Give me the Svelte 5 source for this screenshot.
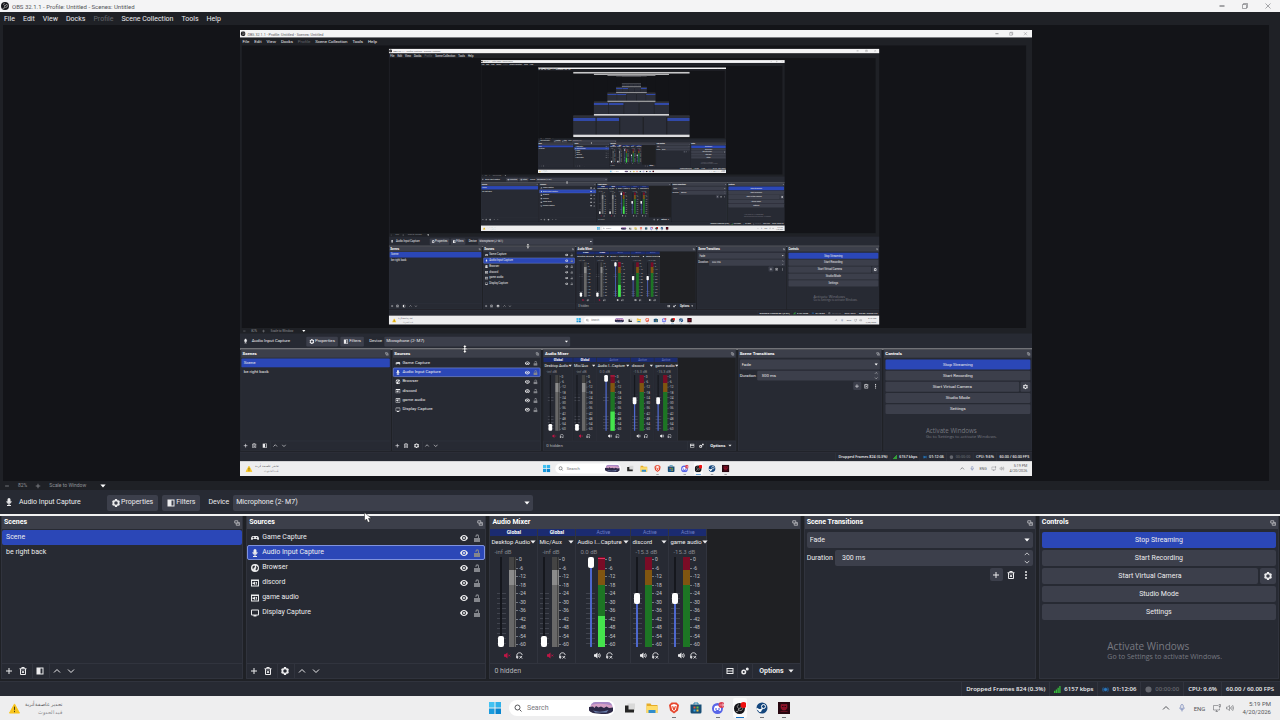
<script>
	const MAX_DEPTH = 4;
	const MAX_THUMBS = 5;
	let heights = $state(Array(MAX_DEPTH + 1).fill(446));

	const menus = ["File", "Edit", "View", "Docks", "Profile", "Scene Collection", "Tools", "Help"];
	const scenes = ["Scene", "be right back"];
	const sources = [
		{ name: "Game Capture", icon: "gamepad" },
		{ name: "Audio Input Capture", icon: "mic" },
		{ name: "Browser", icon: "globe" },
		{ name: "discord", icon: "appaudio" },
		{ name: "game audio", icon: "appaudio" },
		{ name: "Display Capture", icon: "display" }
	];
	const strips = [
		{ tag: "Global", name: "Desktop Audio", db: "-inf dB", volume: 0, muted: true, size: "wide" },
		{ tag: "Global", name: "Mic/Aux", db: "-inf dB", volume: 0, muted: true, size: "slim" },
		{ tag: "Active", name: "Audio I...Capture", db: "0.0 dB", volume: 100, level: 34, size: "widest" },
		{ tag: "Active", name: "discord", db: "-15.3 dB", volume: 55, level: 0, size: "slim" },
		{ tag: "Active", name: "game audio", db: "-15.3 dB", volume: 55, level: 0, size: "slim" }
	];
	const marks = [0, -6, -12, -18, -24, -30, -36, -42, -48, -54, -60];
	const apps = ["taskview", "folder", "brave", "store", "discord", "obs", "steam", "red"];
	const running = ["brave", "discord", "steam", "red"];
</script>

{#snippet icon(name)}
	<svg class="icon" viewBox="0 0 16 16" aria-hidden="true">
		{#if name === "plus"}
			<path class="line" d="M8 2v12M2 8h12" />
		{:else if name === "minus"}
			<path class="line" d="M3 8h10" />
		{:else if name === "trash"}
			<path class="line" d="M1 3.5h14M5.5 3V1h5v2M3 4v11h10V4M6 7l4 5M10 7l-4 5" />
		{:else if name === "filter"}
			<path d="M1 1h14v14H1zM9 3v10h4V3z" fill-rule="evenodd" />
		{:else if name === "up"}
			<path class="line" d="M2 11l6-6 6 6" />
		{:else if name === "down"}
			<path class="line" d="M2 5l6 6 6-6" />
		{:else if name === "caret"}
			<path d="M1 4h14l-7 8z" />
		{:else if name === "gear"}
			<path fill-rule="evenodd" d="M6 0h4l.5 2.2 1.3.8 2.2-.7 2 3.5L14.400 7.300v1.400L16 10.200l-2 3.500-2.200-.7-1.300.8L10 16H6l-.5-2.200-1.300-.8-2.200.7-2-3.500 1.600-1.500V7.300L0 5.800l2-3.500 2.200.7 1.300-.8zM8 4.500a3.500 3.500 0 1 0 0 7 3.500 3.500 0 0 0 0-7z" />
		{:else if name === "gears"}
			<path fill-rule="evenodd" d="M5.500 5a5 5 0 1 1 0 10 5 5 0 0 1 0-10zm0 3a2 2 0 1 0 0 4 2 2 0 0 0 0-4z" />
			<circle cx="12.500" cy="4" r="3" />
		{:else if name === "rows"}
			<path fill-rule="evenodd" d="M1 2h14v12H1zM3 4v3h10V4zM3 9v3h10V9z" />
		{:else if name === "dots"}
			<circle cx="8" cy="2" r="2" /><circle cx="8" cy="8" r="2" /><circle cx="8" cy="14" r="2" />
		{:else if name === "popout"}
			<path class="line" d="M2 2h8v6H2zM6 8v6h9V7h-5M9 10h4" />
		{:else if name === "gamepad"}
			<path fill-rule="evenodd" d="M4 4h8c3 0 4 3 4 6 0 2-3 3-4 0H4c-1 3-4 2-4 0 0-3 1-6 4-6zm0 1.500v1H3v1.500h1v1h1.500V8h1V6.500h-1v-1zM11 6a1.200 1.200 0 1 0 .1 0z" />
		{:else if name === "mic"}
			<path d="M8 0a3 3 0 0 1 3 3v4a3 3 0 0 1-6 0V3a3 3 0 0 1 3-3zM3 6h1.500c0 6 7 6 7 0H13c0 3.500-1.500 5-4 5.500V14h3v2H4v-2h3v-2.500C4.500 11 3 9.500 3 6z" />
		{:else if name === "globe"}
			<path fill-rule="evenodd" d="M8 0a8 8 0 1 1 0 16A8 8 0 0 1 8 0zM3 5l3-2 2 1-1 3-2 1v3l-2-2zM11 3l3 4-1 4-3 2-1-3 2-2-1-2z" />
		{:else if name === "appaudio"}
			<path fill-rule="evenodd" d="M0 1h16v14H0zM2 4v9h12V4zM3 7h2l3-2v7l-3-2H3zM9 6h3v5H9V9.500h1.500v-2H9z" />
		{:else if name === "display"}
			<path fill-rule="evenodd" d="M2 1h12a2 2 0 0 1 2 2v8a2 2 0 0 1-2 2h-3v2H5v-2H2a2 2 0 0 1-2-2V3a2 2 0 0 1 2-2zm0 2v8h12V3z" />
		{:else if name === "eye"}
			<path fill-rule="evenodd" d="M8 2c4 0 7 3 8 6-1 3-4 6-8 6S1 11 0 8c1-3 4-6 8-6zm0 2a4 4 0 1 0 0 8 4 4 0 0 0 0-8zm0 2a2 2 0 1 1 0 4 2 2 0 0 1 0-4z" />
		{:else if name === "lock"}
			<path d="M2 8h8V4a2 2 0 0 0-3 0v2H5V4a3.500 3.500 0 0 1 7 0v4h2v8H2z" />
		{:else if name === "speaker"}
			<path d="M0 5h3l5-4v14l-5-4H0z" />
			<path class="line" d="M10 5q2 3 0 6M12.500 3q4 5 0 10" />
		{:else if name === "muted"}
			<path d="M0 5h3l5-4v14l-5-4H0z" />
			<path class="line" d="M10 6l4 4M14 6l-4 4" />
		{:else if name === "headphones"}
			<path class="line" d="M2 14V7c0-7 12-7 12 0M2 9v5h2V9M8 9l6 6M14 9l-6 6" />
		{:else if name === "close"}
			<path class="thin" d="M3 3l10 10M13 3L3 13" />
		{:else if name === "restore"}
			<path class="thin" d="M3 5h8v8H3zM5 5V3h8v8h-2" />
		{:else if name === "search"}
			<circle class="line" cx="7" cy="7" r="5" /><path class="line" d="M11 11l4 4" />
		{:else if name === "tray-mic"}
			<path class="thin" d="M8 1a2.500 2.500 0 0 1 2.500 2.500v4a2.500 2.500 0 0 1-5 0v-4A2.500 2.500 0 0 1 8 1zM3.500 7c0 6 9 6 9 0M8 12v3" />
		{:else if name === "tray-net"}
			<path class="thin" d="M10 3H1v9h12V9M5 15h5M7 12v3M12 1h3v4h-3zM13.500 5v3" />
		{:else if name === "tray-sound"}
			<path class="thin" d="M1 6h2l4-3v10l-4-3H1zM9 6q1.500 2 0 4M11 4q3 4 0 8M13 2q5 6 0 12" />
		{/if}
	</svg>
{/snippet}

{#snippet obsLogo()}
	<svg class="icon" viewBox="0 0 16 16" aria-hidden="true">
		<circle cx="8" cy="8" r="8" fill="#16161a" />
		<path d="M7 2q-4 3 0 5 4 1 4-3 4 3 1 6-3 2-5-1 1 5-4 4" fill="none" stroke="#c9c9c9" stroke-width="1.200" />
	</svg>
{/snippet}

{#snippet appIcon(name)}
	<svg viewBox="0 0 24 24" aria-hidden="true">
		{#if name === "taskview"}
			<path d="M7 3h15v15H7z" fill="#d9d9d9" /><path d="M2 7h7v8h11v6H2z" fill="#252525" />
		{:else if name === "folder"}
			<path d="M1 3h8l2 3h12v16H1z" fill="#e5ac2a" /><path d="M1 8h22v14H1z" fill="#ffdc68" /><path d="M5 16h14v6H5z" fill="#318dcc" />
		{:else if name === "brave"}
			<path d="M7 1h10l5 5-2 11-8 6-8-6L2 6z" fill="#e6452c" /><path d="M6 6l6-2 6 2-2 9-4 4-4-4z" fill="#fff" /><path d="M8 8l3 1 1 4 1-4 3-1-2 7-2 2-2-2z" fill="#e6452c" />
		{:else if name === "store"}
			<path d="M8 5V2h8v3" fill="none" stroke="#247fac" stroke-width="2" /><path d="M1 5h22v15q0 3-3 3H4q-3 0-3-3z" fill="#174e76" />
			<path d="M7 9h4v4H7z" fill="#e9573c" /><path d="M13 9h4v4h-4z" fill="#7bbd3b" /><path d="M7 15h4v4H7z" fill="#37a5e6" /><path d="M13 15h4v4h-4z" fill="#f3c33b" />
		{:else if name === "discord"}
			<circle cx="11" cy="13" r="11" fill="#5865e8" />
			<path fill-rule="evenodd" d="M6 8q5-2 10 0 3 4 2 9l-3 1-2-2H9l-2 2-3-1q-1-5 2-9zm2 4a1.500 2 0 1 0 .1 0zm6 0a1.500 2 0 1 0 .1 0z" fill="#fff" />
			<circle cx="19" cy="6" r="6" fill="#da3e51" /><path d="M15 6h3M20 4v4h3V4z" stroke="#fff" fill="none" />
		{:else if name === "obs"}
			<circle cx="11" cy="13" r="11" fill="#16161a" /><path d="M9 5q-5 5 0 8 6 1 6-5 5 6 0 9-4 2-6-3 0 7-5 5" fill="none" stroke="#aaa" stroke-width="1.500" /><circle cx="19" cy="6" r="6" fill="#ef1111" />
		{:else if name === "steam"}
			<circle cx="12" cy="12" r="11" fill="#14467d" /><path d="M1 13l7 4 6-5" fill="none" stroke="#fff" stroke-width="3" /><circle cx="15" cy="9" r="4" fill="#14467d" stroke="#fff" stroke-width="2" /><circle cx="8" cy="17" r="3" fill="#fff" />
		{:else}
			<path d="M0 0h24v24H0z" fill="#270710" /><path d="M6 5h12v7l-3 4H9l-3-4zM5 19h14" fill="#8b1027" stroke="#a51831" /><path d="M8 9h3M13 9h3" stroke="#270710" stroke-width="2" />
		{/if}
	</svg>
{/snippet}

{#snippet dockTitle(title)}
	<header class="dock-title">
		<h2>{title}</h2>
		<button aria-label="Undock {title}">{@render icon("popout")}</button>
	</header>
{/snippet}

{#snippet listTools(kind)}
	<footer class="tools">
		<div><button aria-label="Add">{@render icon("plus")}</button><button aria-label="Remove">{@render icon("trash")}</button></div>
		<div><button aria-label={kind === "scene" ? "Scene filters" : "Source properties"}>{@render icon(kind === "scene" ? "filter" : "gear")}</button></div>
		<div><button aria-label="Move up">{@render icon("up")}</button><button aria-label="Move down">{@render icon("down")}</button></div>
	</footer>
{/snippet}

<!-- too small to read: only the bars and panels are left -->
{#snippet thumbnail(level)}
	<div class="thumbnail">
		<div class="thumb-title"></div>
		<div class="thumb-stage">
			{#if level < MAX_THUMBS}{@render thumbnail(level + 1)}{/if}
		</div>
		<div class="thumb-docks">
			<i class="hot"></i><i class="hot"></i><i></i><i></i><i class="hot"></i>
		</div>
		<div class="thumb-taskbar"></div>
	</div>
{/snippet}

{#snippet desktop(depth)}
	<div class="desktop" class:captured={depth > 0}>
		<header class="titlebar">
			{@render obsLogo()}
			<span>OBS 32.1.1 - Profile: Untitled - Scenes: Untitled</span>
			<div class="window-buttons">
				<button aria-label="Minimize">{@render icon("minus")}</button>
				<button aria-label="Restore">{@render icon("restore")}</button>
				<button aria-label="Close">{@render icon("close")}</button>
			</div>
		</header>
		<nav class="menubar">
			{#each menus as menu}
				<button disabled={menu === "Profile"}>{menu}</button>
			{/each}
		</nav>

		<main class="stage">
			<div class="preview" bind:clientHeight={heights[depth]}>
				{#if depth < MAX_DEPTH}
					<div class="feed" style:transform="scale({heights[depth] / 720})" inert aria-hidden="true">
						{@render desktop(depth + 1)}
					</div>
				{:else}
					{@render thumbnail(1)}
				{/if}
			</div>
		</main>

		<div class="zoombar">
			<button aria-label="Zoom out">{@render icon("minus")}</button>
			<span class="percent">82%</span>
			<button aria-label="Zoom in">{@render icon("plus")}</button>
			<div class="combo flat">
				<select aria-label="Preview scaling"><option>Scale to Window</option></select>
				{@render icon("caret")}
			</div>
		</div>

		<section class="context">
			<div class="context-name">{@render icon("mic")}<span>Audio Input Capture</span></div>
			<button class="btn">{@render icon("gear")}Properties</button>
			<button class="btn">{@render icon("filter")}Filters</button>
			<label class="device">
				<span>Device</span>
				<div class="combo">
					<select><option>Microphone (2- M7)</option></select>
					{@render icon("caret")}
				</div>
			</label>
		</section>
		<div class="splitter"></div>

		<div class="docks">
			<section class="dock">
				{@render dockTitle("Scenes")}
				<ul class="list">
					{#each scenes as scene, i}
						<li class:selected={i === 0}><button class="row-name">{scene}</button></li>
					{/each}
				</ul>
				{@render listTools("scene")}
			</section>

			<section class="dock">
				{@render dockTitle("Sources")}
				<ul class="list sources">
					{#each sources as source, i}
						<li class:selected={i === 1}>
							<button class="row-name">{@render icon(source.icon)}{source.name}</button>
							<button aria-label="Toggle visibility of {source.name}">{@render icon("eye")}</button>
							<button class="lock" aria-label="Lock {source.name}">{@render icon("lock")}</button>
						</li>
					{/each}
				</ul>
				{@render listTools("source")}
			</section>

			<section class="dock">
				{@render dockTitle("Audio Mixer")}
				<div class="mixer">
					{#each strips as strip}
						<div class="strip {strip.size}" class:muted={strip.muted}>
							<div class="tag">{strip.tag}</div>
							<button class="strip-name"><span>{strip.name}</span>{@render icon("caret")}</button>
							<div class="db">{strip.db}</div>
							<div class="fader">
								<div class="slot">
									<input type="range" aria-label="{strip.name} volume" value={strip.volume} style:--level="{strip.volume}%" />
								</div>
								<div class="meter">
									{#if strip.level}
										<div class="peak"></div>
										<div class="level" style:height="{strip.level}%"></div>
									{/if}
								</div>
								<div class="scale">
									{#each marks as mark}<span>{mark}</span>{/each}
								</div>
							</div>
							<div class="strip-buttons">
								<button class="mute" aria-label="Mute {strip.name}">{@render icon(strip.muted ? "muted" : "speaker")}</button>
								<button aria-label="Monitor {strip.name}">{@render icon("headphones")}</button>
							</div>
						</div>
					{/each}
				</div>
				<footer class="tools mixer-tools">
					<span>0 hidden</span>
					<div><button aria-label="Mixer layout">{@render icon("rows")}</button></div>
					<div><button aria-label="Advanced audio properties">{@render icon("gears")}</button></div>
					<div><button class="options">Options {@render icon("caret")}</button></div>
				</footer>
			</section>

			<section class="dock">
				{@render dockTitle("Scene Transitions")}
				<div class="transitions">
					<div class="combo">
						<select aria-label="Transition"><option>Fade</option></select>
						{@render icon("caret")}
					</div>
					<label class="duration">
						<span>Duration</span>
						<div class="spin">
							<input type="text" value="300 ms" />
							<div class="arrows">{@render icon("up")}{@render icon("down")}</div>
						</div>
					</label>
					<div class="transition-tools">
						<button class="add" aria-label="Add transition">{@render icon("plus")}</button>
						<button aria-label="Remove transition">{@render icon("trash")}</button>
						<button aria-label="Transition menu">{@render icon("dots")}</button>
					</div>
				</div>
			</section>

			<section class="dock">
				{@render dockTitle("Controls")}
				<div class="controls">
					<button class="btn primary">Stop Streaming</button>
					<button class="btn">Start Recording</button>
					<div class="camera">
						<button class="btn">Start Virtual Camera</button>
						<button class="btn" aria-label="Virtual camera settings">{@render icon("gear")}</button>
					</div>
					<button class="btn">Studio Mode</button>
					<button class="btn">Settings</button>
				</div>
			</section>
		</div>

		<footer class="status">
			<span>Dropped Frames 824 (0.3%)</span>
			<span>
				<svg class="icon bars" viewBox="0 0 16 16" aria-hidden="true"><path d="M0 11h3v5H0zM4 8h3v8H4zM8 4h3v12H8zM12 0h3v16h-3z" /></svg>
				6157 kbps
			</span>
			<span>
				<svg class="icon live" viewBox="0 0 16 16" aria-hidden="true"><circle cx="8" cy="8" r="4" /><path d="M3 2q-4 6 0 12M13 2q4 6 0 12" /></svg>
				01:12:06
			</span>
			<span class="idle">
				<svg class="icon" viewBox="0 0 16 16" aria-hidden="true"><circle cx="8" cy="8" r="7" /></svg>
				00:00:00
			</span>
			<span>CPU: 9.6%</span>
			<span>60.00 / 60.00 FPS</span>
		</footer>

		<footer class="taskbar">
			<div class="weather">
				<svg viewBox="0 0 24 24" aria-hidden="true"><path d="M12 2l11 20H1z" fill="#f8c51c" stroke="#f8c51c" stroke-width="2" stroke-linejoin="round" /><path d="M12 8v7M12 17v3" stroke="#3a3210" stroke-width="2" /></svg>
				<div lang="ar" dir="rtl">تحذير عاصفة أتربة<br /><small>قيد الحدوث</small></div>
			</div>
			<div class="apps">
				<button aria-label="Start">
					<svg viewBox="0 0 24 24" aria-hidden="true"><path d="M0 0h11v11H0z" fill="#42c2f2" /><path d="M13 0h11v11H13z" fill="#30b1e9" /><path d="M0 13h11v11H0z" fill="#1a9bdd" /><path d="M13 13h11v11H13z" fill="#0985cf" /></svg>
				</button>
				<label class="search">
					{@render icon("search")}
					<input type="search" aria-label="Search" placeholder="Search" />
					<svg class="scenery" viewBox="0 0 48 24" aria-hidden="true">
						<rect x="3" width="44" height="21" rx="10" fill="#a988c5" />
						<path d="M4 6q20-5 42 1v5H4z" fill="#d6a0c5" />
						<path d="M0 10l8-1 3 3 3-4 5 3 5-2 6 3 5-3 5 3 8-1v7q-6 7-23 6-22-1-25-7z" fill="#2d2947" />
						<path d="M8 17q14 5 31-1l-4 5H13z" fill="#6b81af" />
					</svg>
				</label>
				{#each apps as app}
					<button class="app" class:running={running.includes(app)} class:focused={app === "obs"} aria-label={app}>{@render appIcon(app)}</button>
				{/each}
			</div>
			<div class="tray">
				<button aria-label="Hidden icons">{@render icon("up")}</button>
				<button class="tray-mic" aria-label="Microphone in use">{@render icon("tray-mic")}</button>
				<span class="lang">ENG</span>
				<button class="net" aria-label="Network and sound">{@render icon("tray-net")}{@render icon("tray-sound")}</button>
				<time>5:19 PM<br />4/20/2026</time>
			</div>
		</footer>

		<div class="watermark">
			<strong>Activate Windows</strong>
			<span>Go to Settings to activate Windows.</span>
		</div>
		<svg class="cursor" viewBox="0 0 16 22" aria-hidden="true">
			{#if depth === 0}
				<path d="M1 1v17l4-4 3 7 4-2-3-6h6z" />
			{:else}
				<path d="M8 0l5 6h-3v3h5v3h-5v4h3l-5 6-5-6h3v-4H1V9h5V6H3z" />
			{/if}
		</svg>
	</div>
{/snippet}

{@render desktop(0)}

<style>
	:global(body) {
		margin: 0;
		background: #1f2126;
		overflow: hidden;
	}
	.desktop, .desktop * {
		box-sizing: border-box;
	}
	.desktop {
		position: relative;
		display: flex;
		flex-direction: column;
		height: 100vh;
		overflow: hidden;
		background: #1f2126;
		color: #ececee;
		font-family: Roboto, "Open Sans", sans-serif;
		font-size: 7px;
		line-height: 9px;
	}
	/* a captured frame is always one full monitor */
	.captured {
		width: 1280px;
		height: 720px;
	}
	button, input, select {
		margin: 0;
		padding: 0;
		border: 0;
		background: none;
		color: inherit;
		font: inherit;
		outline: none;
	}
	button {
		display: flex;
		align-items: center;
		justify-content: center;
		white-space: nowrap;
	}
	h2, ul {
		margin: 0;
		padding: 0;
		list-style: none;
	}
	.icon {
		width: 8px;
		height: 8px;
		flex: none;
		fill: currentColor;
	}
	.line, .thin {
		fill: none;
		stroke: currentColor;
		stroke-width: 2;
	}
	.thin {
		stroke-width: 1;
	}

	.titlebar {
		display: flex;
		align-items: center;
		gap: 3px;
		height: 12px;
		padding: 0 1px;
		background: #f4f4f5;
		color: #55565a;
		font-size: 6px;
	}
	.window-buttons {
		display: flex;
		margin-left: auto;
	}
	.window-buttons button {
		width: 23px;
	}
	.menubar {
		display: flex;
		align-items: center;
		gap: 8px;
		height: 13px;
		padding: 1px 4px 0;
	}
	.menubar button:disabled {
		color: #66686e;
	}

	.stage {
		flex: 1;
		min-height: 0;
		display: flex;
		justify-content: center;
		margin: 0 11px 0 3px;
		padding: 5px 0;
		background: #131418;
	}
	.preview {
		height: 100%;
		aspect-ratio: 16 / 9;
		overflow: hidden;
	}
	.feed {
		width: 1280px;
		height: 720px;
		transform-origin: 0 0;
	}
	.thumbnail {
		display: flex;
		flex-direction: column;
		height: 100%;
		aspect-ratio: 16 / 9;
		background: #131418;
	}
	.thumb-title {
		flex: 3;
		background: #c8c8ca;
	}
	.thumb-stage {
		flex: 64;
		min-height: 0;
		display: flex;
		justify-content: center;
	}
	.thumb-docks {
		flex: 28;
		display: flex;
		gap: 1%;
		border-top: 3px solid #85878e;
		background: #1f2126;
	}
	.thumb-docks i {
		flex: 1;
		background: #2b2e39;
	}
	.thumb-docks .hot {
		background: linear-gradient(#2b2e39 8%, #3149a8 8% 24%, #2b2e39 24%);
	}
	.thumb-taskbar {
		flex: 4;
		background: #dcdcde;
	}

	.zoombar {
		display: flex;
		align-items: center;
		gap: 8px;
		height: 9px;
		padding: 0 4px;
		color: #8f9196;
		font-size: 5px;
	}
	.zoombar .icon {
		width: 6px;
		height: 6px;
	}
	.combo {
		position: relative;
		display: flex;
		align-items: center;
		height: 16px;
		padding: 0 3px;
		border-radius: 2px;
		background: #3c3f4b;
	}
	.combo select {
		flex: 1;
		appearance: none;
	}
	.combo .icon {
		width: 6px;
		height: 6px;
		color: #fff;
	}
	.combo.flat {
		width: 57px;
		height: 9px;
		padding: 0;
		background: none;
	}
	.context {
		display: flex;
		align-items: center;
		gap: 4px;
		height: 24px;
		padding: 1px 5px 0;
		background: #272a33;
	}
	.context-name {
		display: flex;
		gap: 6px;
		width: 98px;
	}
	.btn {
		height: 16px;
		gap: 1px;
		padding: 0 5px;
		border-radius: 2px;
		background: #3c3f4b;
	}
	.device {
		display: flex;
		align-items: center;
		gap: 4px;
		margin-left: 4px;
	}
	.device .combo {
		width: 300px;
	}
	.splitter {
		height: 2px;
		background: #f2f2f2;
	}
	.captured .splitter {
		background: #a5a6aa;
	}

	.docks {
		display: grid;
		grid-template-columns: 242fr 240fr 311fr 232fr 240fr;
		gap: 3px;
		height: 163px;
		padding: 0 1px;
	}
	.dock {
		display: flex;
		flex-direction: column;
		min-width: 0;
		border: 1px solid #30333d;
		border-top: 0;
		background: #272a33;
	}
	.dock-title {
		display: flex;
		align-items: center;
		justify-content: space-between;
		height: 13px;
		padding: 0 2px;
		background: #3c3f4a;
		color: #fff;
	}
	.dock-title h2 {
		font-size: 7px;
		font-weight: 700;
	}
	.dock-title .icon {
		width: 6px;
		height: 6px;
		color: #c5c6ca;
	}
	.list {
		flex: 1;
		padding-top: 1px;
	}
	.list li {
		display: flex;
		align-items: center;
		gap: 5px;
		height: 15px;
		padding: 0 3px;
		border: 1px solid transparent;
		border-radius: 2px;
	}
	.list .selected {
		background: #2b47b7;
	}
	.sources .selected {
		border-color: #7f92dd;
	}
	.row-name {
		flex: 1;
		gap: 3px;
		justify-content: flex-start;
	}
	.lock {
		color: #84868c;
	}
	.tools {
		display: flex;
		align-items: center;
		height: 15px;
		border-top: 1px solid #31343e;
	}
	.tools div {
		display: flex;
		align-items: center;
		height: 14px;
		padding-right: 2px;
		border-right: 1px solid #31343e;
	}
	.tools div:last-child {
		border: 0;
	}
	.tools button {
		min-width: 14px;
	}

	.mixer {
		flex: 1;
		display: flex;
		background: #1f2023;
	}
	.strip {
		display: flex;
		flex-direction: column;
		width: 38px;
		border-right: 1px solid #31343e;
		background: #272a33;
	}
	.wide {
		width: 48px;
	}
	.widest {
		width: 55px;
	}
	.tag {
		height: 7px;
		background: #1b2b70;
		color: #7080c4;
		font-size: 5px;
		line-height: 7px;
		text-align: center;
	}
	.muted .tag {
		color: #fff;
		font-weight: 700;
	}
	.strip-name {
		justify-content: space-between;
		height: 11px;
		padding: 0 1px;
		font-size: 6px;
	}
	.strip-name .icon {
		width: 6px;
		height: 6px;
	}
	.db {
		height: 10px;
		padding-left: 4px;
		color: #85878e;
		font-size: 6px;
	}
	.fader {
		display: flex;
		justify-content: center;
		height: 90px;
		padding-right: 3px;
	}
	.slot {
		display: flex;
		width: 9px;
		margin-right: 3px;
		background: repeating-linear-gradient(#272a33 0 4px, #41444e 4px 5px) 0 32px no-repeat;
	}
	.slot input {
		appearance: none;
		writing-mode: vertical-lr;
		direction: rtl;
		width: 9px;
		height: 90px;
		background: linear-gradient(to top, #4e68cd var(--level), #15171d var(--level)) center / 2px 100% no-repeat;
	}
	.slot input::-webkit-slider-thumb {
		appearance: none;
		width: 6px;
		height: 11px;
		border-radius: 2px;
		background: #fff;
	}
	.meter {
		display: flex;
		flex-direction: column;
		justify-content: space-between;
		width: 7px;
		background: linear-gradient(#7a0c26 0 14%, #805510 14% 31%, #1d7524 31%);
	}
	.muted .meter {
		background: linear-gradient(to right, transparent 5px, #00000055 5px 6px, transparent 6px), linear-gradient(#444 0 14%, #8b8b8b 14% 31%, #686868 31%);
	}
	.peak {
		height: 1px;
		margin-top: 1px;
		background: #e0305f;
	}
	.level {
		background: #45e34d;
	}
	.scale {
		display: flex;
		flex-direction: column;
		justify-content: space-between;
		width: 12px;
		color: #c5c6ca;
		font-size: 5px;
		line-height: 5px;
	}
	.scale span {
		display: flex;
		align-items: center;
		gap: 1px;
	}
	.scale span::before {
		content: "";
		width: 2px;
		height: 1px;
		background: #777980;
	}
	.strip-buttons {
		flex: 1;
		display: flex;
		align-items: center;
		justify-content: center;
		gap: 5px;
	}
	.strip-buttons .icon {
		width: 7px;
		height: 7px;
	}
	.muted .mute {
		color: #c01645;
	}
	.mixer-tools span {
		flex: 1;
		padding-left: 4px;
		color: #b5b6ba;
	}
	.mixer-tools div {
		padding: 0;
		border: 0;
		border-left: 1px solid #31343e;
	}
	.mixer-tools div:last-child {
		border-left: 1px solid #31343e;
	}
	.tools .options {
		gap: 4px;
		padding: 0 6px;
		font-weight: 700;
	}
	.options .icon {
		width: 6px;
		height: 6px;
	}

	.transitions {
		display: flex;
		flex-direction: column;
		gap: 2px;
		padding: 3px 2px;
	}
	.duration {
		display: flex;
		align-items: center;
		gap: 2px;
	}
	.spin {
		flex: 1;
		display: flex;
		height: 16px;
		padding: 0 3px 0 7px;
		border-radius: 2px;
		background: #3c3f4b;
	}
	.spin input {
		flex: 1;
		min-width: 0;
	}
	.arrows {
		display: flex;
		flex-direction: column;
		justify-content: space-around;
	}
	.arrows .icon {
		width: 6px;
		height: 6px;
	}
	.transition-tools {
		display: flex;
		justify-content: flex-end;
		gap: 2px;
	}
	.transition-tools button {
		width: 13px;
		height: 13px;
		border-radius: 2px;
	}
	.transition-tools .add {
		background: #3c3f4b;
	}
	.controls {
		display: flex;
		flex-direction: column;
		gap: 2px;
		padding: 3px 2px;
	}
	.controls .primary {
		background: #2b47b7;
	}
	.camera {
		display: flex;
		gap: 2px;
	}
	.camera .btn:first-child {
		flex: 1;
	}
	.camera .btn:last-child {
		padding: 0 4px;
	}

	.status {
		display: flex;
		justify-content: flex-end;
		height: 15px;
		margin-top: 2px;
		padding-right: 2px;
		border-top: 1px solid #30333d;
		background: #272a33;
		color: #f0f0f2;
		font-family: "Open Sans", "Noto Sans", sans-serif;
		font-size: 6px;
		font-weight: 600;
	}
	.status span {
		display: flex;
		align-items: center;
		gap: 3px;
		padding: 0 4px;
		border-left: 1px solid #31343e;
	}
	.status .icon {
		width: 7px;
		height: 7px;
	}
	.bars {
		color: #36b93a;
	}
	.live {
		fill: #2c79be;
		stroke: #1d5183;
	}
	.status .idle {
		color: #64666d;
	}

	.taskbar {
		display: grid;
		grid-template-columns: 1fr auto 1fr;
		align-items: center;
		height: 24px;
		padding: 0 9px;
		background: #eeeeef;
		color: #55565a;
	}
	.taskbar svg {
		flex: none;
	}
	.weather {
		display: flex;
		align-items: center;
		gap: 5px;
		font-size: 5px;
		line-height: 8px;
	}
	.weather svg {
		width: 11px;
		height: 11px;
	}
	.weather small {
		font-size: 5px;
		color: #85868a;
	}
	.apps {
		display: flex;
		align-items: center;
		gap: 8px;
	}
	.apps button {
		position: relative;
		width: 14px;
		height: 20px;
	}
	.apps button:first-child {
		width: 12px;
	}
	.apps button svg {
		width: 12px;
		height: 12px;
	}
	.running::after, .focused::after {
		content: "";
		position: absolute;
		bottom: 0;
		left: 5px;
		width: 4px;
		height: 1px;
		background: #76777b;
	}
	.apps .focused {
		background: #fbfbfb;
		border-radius: 2px;
	}
	.focused::after {
		left: 3px;
		width: 8px;
		background: #1974c5;
	}
	.search {
		display: flex;
		align-items: center;
		gap: 5px;
		width: 106px;
		height: 16px;
		padding: 0 2px 0 5px;
		border-radius: 8px;
		background: #fff;
	}
	.search input {
		flex: 1;
		min-width: 0;
	}
	.search input::placeholder {
		color: #77787c;
	}
	.scenery {
		width: 24px;
		height: 12px;
	}
	.tray {
		display: flex;
		align-items: center;
		justify-content: flex-end;
		gap: 8px;
		font-size: 6px;
	}
	.tray-mic {
		color: #4059a0;
	}
	.net {
		gap: 5px;
	}
	.tray time {
		line-height: 8px;
		text-align: right;
	}

	.watermark {
		position: absolute;
		right: 58px;
		bottom: 58px;
		display: flex;
		flex-direction: column;
		color: #777981;
		font-family: "Open Sans", "Noto Sans", sans-serif;
		line-height: 10px;
		pointer-events: none;
	}
	.watermark strong {
		font-size: 10px;
		font-weight: 400;
		line-height: 12px;
	}
	.cursor {
		position: absolute;
		left: 364px;
		top: 512px;
		width: 8px;
		height: 11px;
		fill: #fff;
		stroke: #15161a;
		pointer-events: none;
	}
	.captured .cursor {
		left: 358px;
		top: 508px;
		width: 10px;
		height: 14px;
	}
</style>
